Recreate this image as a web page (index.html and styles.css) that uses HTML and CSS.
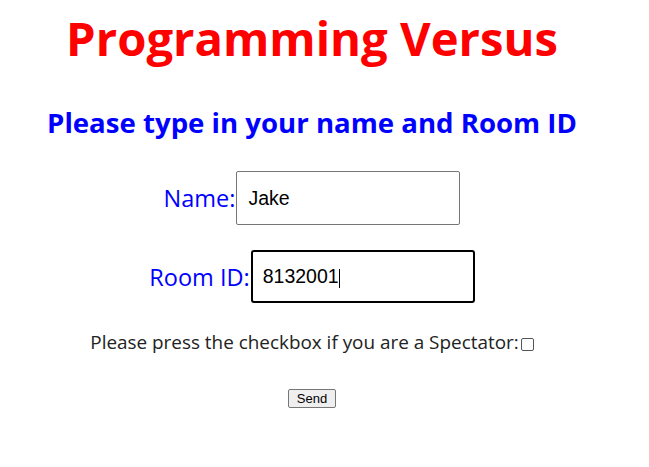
FILE: index.html
```html
<!DOCTYPE html>
<html>
<head>
<meta charset="utf-8">
<link rel="stylesheet" href="styles.css">
</head>
<body>
<div class="page">
  <h1 class="title">Programming Versus</h1>
  <h2 class="subtitle">Please type in your name and Room ID</h2>
  <form class="form">
    <div class="row row-name">
      <label class="label" for="name">Name:</label>
      <input class="field" id="name" type="text" value="Jake">
    </div>
    <div class="row row-room">
      <label class="label" for="room">Room ID:</label>
      <input class="field field-focus" id="room" type="text" value="8132001"><span class="caret"></span>
    </div>
    <div class="row row-check">
      <span class="check-text">Please press the checkbox if you are a Spectator:</span><span class="checkbox"></span>
    </div>
    <div class="row row-send">
      <button class="send" type="button">Send</button>
    </div>
  </form>
</div>
</body>
</html>
```
FILE: styles.css
```css
html, body {
  margin: 0;
  padding: 0;
  background: #fff;
}
.page {
  width: 624px;
  display: flex;
  flex-direction: column;
  align-items: center;
  font-family: "Open Sans", "Noto Sans", sans-serif;
}
.title {
  margin: 6px 0 0;
  color: #ff0000;
  font-size: 47.2px;
  font-weight: 700;
  line-height: 64px;
}
.subtitle {
  margin: 34px 0 0;
  color: #0000ff;
  font-size: 27.6px;
  font-weight: 700;
  line-height: 36px;
}
.form {
  display: flex;
  flex-direction: column;
  align-items: center;
}
.row {
  display: flex;
  align-items: center;
}
.row-name {
  margin-top: 31px;
}
.row-room {
  margin-top: 25px;
  position: relative;
}
.label {
  color: #0000ff;
  font-size: 23.5px;
  line-height: 30px;
}
.field {
  box-sizing: border-box;
  width: 224px;
  height: 54px;
  margin: 0 0 0 1px;
  padding: 0 0 0 11px;
  border: 1px solid #767676;
  border-radius: 2px;
  font-family: "Liberation Sans", Arial, sans-serif;
  font-size: 19.5px;
  color: #000;
  background: #fff;
  outline: none;
}
.field-focus {
  height: 53px;
  border: 2px solid #000;
  border-radius: 3px;
  padding-left: 10px;
}
.caret {
  position: absolute;
  left: 190px;
  top: 19px;
  width: 1px;
  height: 19px;
  background: #000;
}
.row-check {
  margin-top: 27px;
}
.check-text {
  color: #222;
  font-size: 18.9px;
  line-height: 24px;
}
.checkbox {
  box-sizing: border-box;
  width: 13px;
  height: 13px;
  margin: 5px 0 0 2px;
  border: 1px solid #555;
  border-radius: 2px;
  background: #fff;
}
.row-send {
  margin-top: 35px;
}
.send {
  box-sizing: border-box;
  width: 48px;
  height: 19px;
  padding: 0;
  border: 1px solid #767676;
  border-radius: 2px;
  background: #efefef;
  font-family: "Liberation Sans", Arial, sans-serif;
  font-size: 13px;
  color: #000;
}
```
